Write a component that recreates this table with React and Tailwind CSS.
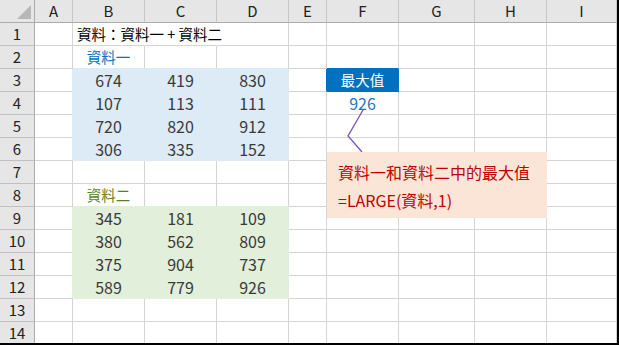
import React from "react";

const FONT = "font-['Noto_Sans_CJK_TC','Noto_Sans',sans-serif]";

const COLS = [
  { key: "A", w: "w-[38px]" },
  { key: "B", w: "w-[72px]" },
  { key: "C", w: "w-[72px]" },
  { key: "D", w: "w-[72px]" },
  { key: "E", w: "w-[38px]" },
  { key: "F", w: "w-[72px]" },
  { key: "G", w: "w-[76px]" },
  { key: "H", w: "w-[72px]" },
  { key: "I", w: "flex-1" },
];

const DATA1 = [
  ["674", "419", "830"],
  ["107", "113", "111"],
  ["720", "820", "912"],
  ["306", "335", "152"],
];
const DATA2 = [
  ["345", "181", "109"],
  ["380", "562", "809"],
  ["375", "904", "737"],
  ["589", "779", "926"],
];

const GRID = "border-r border-b border-[#d4d4d4]";
const isBCD = (c) => c === "B" || c === "C" || c === "D";

// 每一格的內容與邊框顏色（填色的範圍會蓋住格線）
function cellOf(row, col) {
  const ci = "BCD".indexOf(col);
  if (row >= 3 && row <= 6 && isBCD(col)) {
    return { text: DATA1[row - 3][ci], cls: "bg-[#ddebf7] border-r border-b border-[#ddebf7] justify-center text-[16px] text-[#3a3a3a]" };
  }
  if (row >= 9 && row <= 12 && isBCD(col)) {
    return { text: DATA2[row - 9][ci], cls: "bg-[#e2efda] border-r border-b border-[#e2efda] justify-center text-[16px] text-[#3a3a3a]" };
  }
  if (col === "A" && row >= 3 && row <= 6) {
    return { cls: "border-r border-b border-b-[#d4d4d4] border-r-[#ddebf7]" };
  }
  if (col === "A" && row >= 9 && row <= 12) {
    return { cls: "border-r border-b border-b-[#d4d4d4] border-r-[#e2efda]" };
  }
  if (row === 1 && col === "B") {
    return {
      text: "資料：資料一 + 資料二",
      cls: "border-r border-b border-r-transparent border-b-[#d4d4d4] pl-[4px] text-[14.5px] text-black whitespace-nowrap",
    };
  }
  if (row === 1 && col === "C") {
    return { cls: "border-r border-b border-r-transparent border-b-[#d4d4d4]" };
  }
  if (row === 2 && isBCD(col)) {
    return {
      text: col === "B" ? "資料一" : null,
      cls: "border-r border-b border-r-[#d4d4d4] border-b-[#ddebf7] justify-center text-[14.5px] text-[#0070c0]",
    };
  }
  if (row === 8 && isBCD(col)) {
    return {
      text: col === "B" ? "資料二" : null,
      cls: "border-r border-b border-r-[#d4d4d4] border-b-[#e2efda] justify-center text-[14.5px] text-[#5f7f1f]",
    };
  }
  if (row === 2 && col === "F") {
    return { cls: "border-r border-b border-r-[#d4d4d4] border-b-[#0070c0]" };
  }
  if (row === 3 && col === "E") {
    return { cls: "border-r border-b border-b-[#d4d4d4] border-r-[#0070c0]" };
  }
  if (row === 3 && col === "F") {
    return { text: "最大值", cls: "bg-[#0070c0] border-r border-b border-[#0070c0] justify-center text-[14.5px] text-white" };
  }
  if (row === 4 && col === "F") {
    return { text: "926", cls: `${GRID} justify-center text-[16px] text-[#1f74c4]` };
  }
  return { cls: GRID };
}

function HeaderRow() {
  return (
    <div className="flex h-[23px]">
      <div className="w-[35px] h-full bg-[#e6e6e6] border-r border-b border-[#ababab] flex items-end justify-end pr-[3px] pb-[3px]">
        <svg width="14" height="14" viewBox="0 0 14 14">
          <polygon points="14,0 14,14 0,14" fill="#b7b7b7" />
        </svg>
      </div>
      {COLS.map((c) => (
        <div
          key={c.key}
          className={`${c.w} h-full bg-[#e6e6e6] border-r border-b border-r-[#c6c6c6] border-b-[#ababab] flex items-center justify-center text-[15px] text-[#222]`}
        >
          {c.key}
        </div>
      ))}
    </div>
  );
}

function Row({ n }) {
  return (
    <div className="flex h-[23px]">
      <div className="w-[35px] h-full bg-[#e6e6e6] border-r border-b border-r-[#ababab] border-b-[#c0c0c0] flex items-center justify-center text-[15px] text-[#222]">
        {n}
      </div>
      {COLS.map((c) => {
        const cell = cellOf(n, c.key);
        return (
          <div key={c.key} className={`${c.w} h-full flex items-center ${cell.cls}`}>
            {cell.text}
          </div>
        );
      })}
    </div>
  );
}

export default function App() {
  const rows = Array.from({ length: 14 }, (_, i) => i + 1);
  return (
    <div className={`relative w-[619px] h-[345px] overflow-hidden bg-white border-r-2 border-b-2 border-black ${FONT}`}>
      <HeaderRow />
      {rows.map((n) => (
        <Row key={n} n={n} />
      ))}

      {/* 指向 926 的線 */}
      <svg className="absolute left-0 top-0 pointer-events-none" width="619" height="345">
        <polyline points="363,110 348,136 362,152" fill="none" stroke="#7a4fc0" strokeWidth="1.3" />
      </svg>

      {/* 說明方塊 */}
      <div className="absolute left-[327px] top-[152px] w-[220px] h-[66px] bg-[#fbe5d6] pl-[11px] pt-[6px] text-[16px] leading-[28px] text-[#c00000]">
        <div>資料一和資料二中的最大值</div>
        <div>=LARGE(資料,1)</div>
      </div>
    </div>
  );
}
